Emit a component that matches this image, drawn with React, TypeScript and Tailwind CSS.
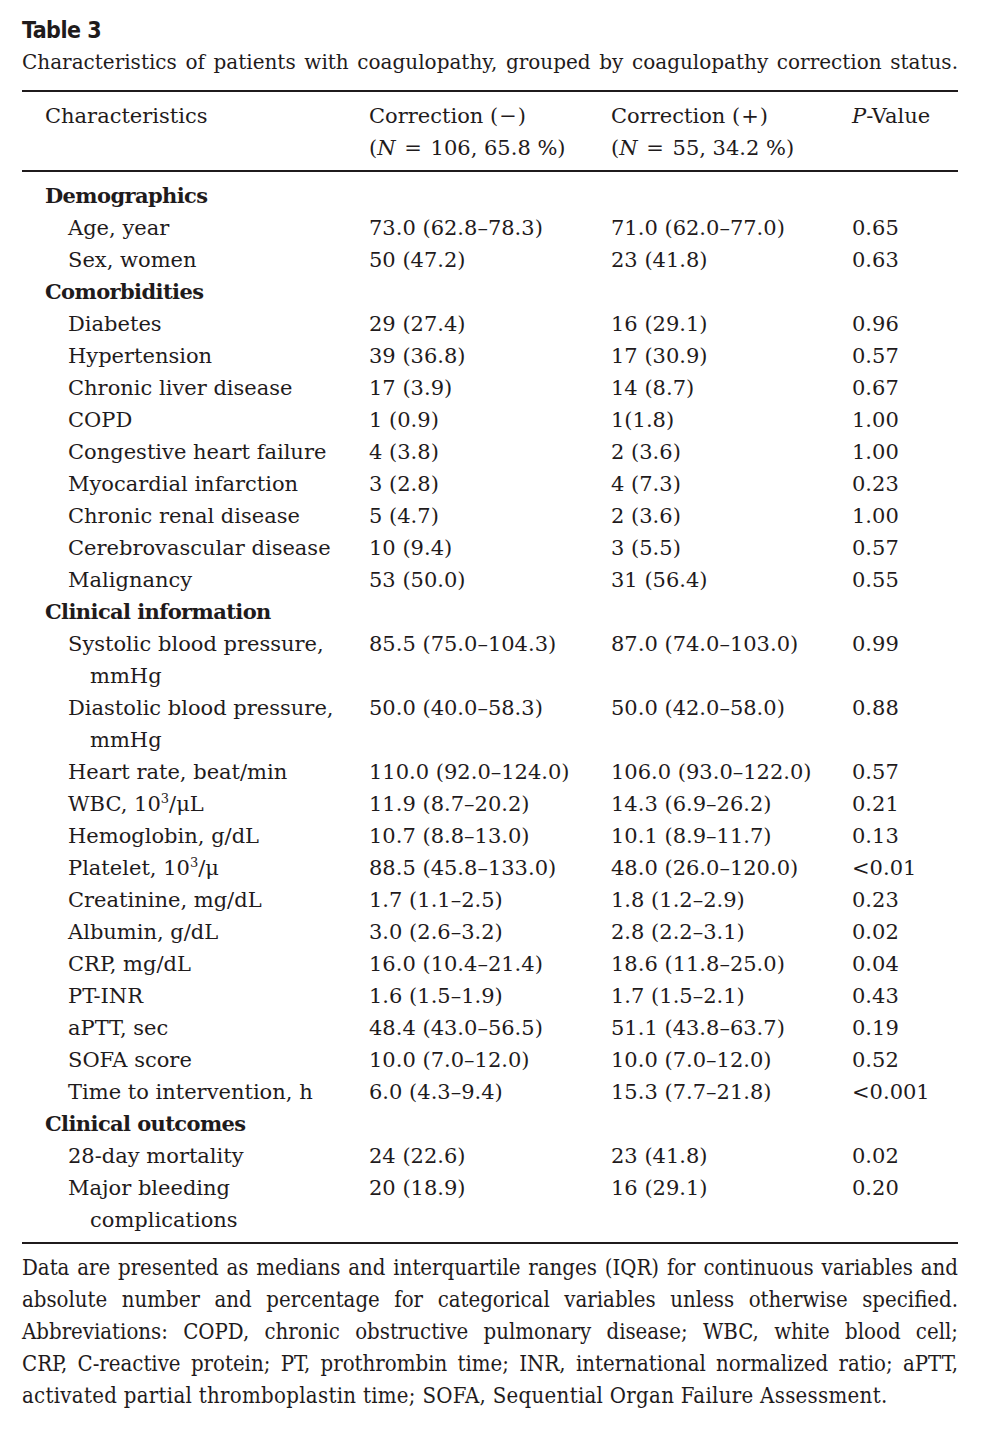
type Row =
  | { kind: 'group'; label: string }
  | { kind: 'item'; label: React.ReactNode; cont?: string; a: string; b: string; p: string };

const sup = 'text-[13px] relative -top-[8px]';

const rows: Row[] = [
  { kind: 'group', label: 'Demographics' },
  { kind: 'item', label: 'Age, year', a: '73.0 (62.8–78.3)', b: '71.0 (62.0–77.0)', p: '0.65' },
  { kind: 'item', label: 'Sex, women', a: '50 (47.2)', b: '23 (41.8)', p: '0.63' },
  { kind: 'group', label: 'Comorbidities' },
  { kind: 'item', label: 'Diabetes', a: '29 (27.4)', b: '16 (29.1)', p: '0.96' },
  { kind: 'item', label: 'Hypertension', a: '39 (36.8)', b: '17 (30.9)', p: '0.57' },
  { kind: 'item', label: 'Chronic liver disease', a: '17 (3.9)', b: '14 (8.7)', p: '0.67' },
  { kind: 'item', label: 'COPD', a: '1 (0.9)', b: '1(1.8)', p: '1.00' },
  { kind: 'item', label: 'Congestive heart failure', a: '4 (3.8)', b: '2 (3.6)', p: '1.00' },
  { kind: 'item', label: 'Myocardial infarction', a: '3 (2.8)', b: '4 (7.3)', p: '0.23' },
  { kind: 'item', label: 'Chronic renal disease', a: '5 (4.7)', b: '2 (3.6)', p: '1.00' },
  { kind: 'item', label: 'Cerebrovascular disease', a: '10 (9.4)', b: '3 (5.5)', p: '0.57' },
  { kind: 'item', label: 'Malignancy', a: '53 (50.0)', b: '31 (56.4)', p: '0.55' },
  { kind: 'group', label: 'Clinical information' },
  { kind: 'item', label: 'Systolic blood pressure,', cont: 'mmHg', a: '85.5 (75.0–104.3)', b: '87.0 (74.0–103.0)', p: '0.99' },
  { kind: 'item', label: 'Diastolic blood pressure,', cont: 'mmHg', a: '50.0 (40.0–58.3)', b: '50.0 (42.0–58.0)', p: '0.88' },
  { kind: 'item', label: 'Heart rate, beat/min', a: '110.0 (92.0–124.0)', b: '106.0 (93.0–122.0)', p: '0.57' },
  {
    kind: 'item',
    label: (
      <>
        WBC, 10<sup className={sup}>3</sup>/μL
      </>
    ),
    a: '11.9 (8.7–20.2)',
    b: '14.3 (6.9–26.2)',
    p: '0.21',
  },
  { kind: 'item', label: 'Hemoglobin, g/dL', a: '10.7 (8.8–13.0)', b: '10.1 (8.9–11.7)', p: '0.13' },
  {
    kind: 'item',
    label: (
      <>
        Platelet, 10<sup className={sup}>3</sup>/μ
      </>
    ),
    a: '88.5 (45.8–133.0)',
    b: '48.0 (26.0–120.0)',
    p: '<0.01',
  },
  { kind: 'item', label: 'Creatinine, mg/dL', a: '1.7 (1.1–2.5)', b: '1.8 (1.2–2.9)', p: '0.23' },
  { kind: 'item', label: 'Albumin, g/dL', a: '3.0 (2.6–3.2)', b: '2.8 (2.2–3.1)', p: '0.02' },
  { kind: 'item', label: 'CRP, mg/dL', a: '16.0 (10.4–21.4)', b: '18.6 (11.8–25.0)', p: '0.04' },
  { kind: 'item', label: 'PT-INR', a: '1.6 (1.5–1.9)', b: '1.7 (1.5–2.1)', p: '0.43' },
  { kind: 'item', label: 'aPTT, sec', a: '48.4 (43.0–56.5)', b: '51.1 (43.8–63.7)', p: '0.19' },
  { kind: 'item', label: 'SOFA score', a: '10.0 (7.0–12.0)', b: '10.0 (7.0–12.0)', p: '0.52' },
  { kind: 'item', label: 'Time to intervention, h', a: '6.0 (4.3–9.4)', b: '15.3 (7.7–21.8)', p: '<0.001' },
  { kind: 'group', label: 'Clinical outcomes' },
  { kind: 'item', label: '28-day mortality', a: '24 (22.6)', b: '23 (41.8)', p: '0.02' },
  { kind: 'item', label: 'Major bleeding', cont: 'complications', a: '20 (18.9)', b: '16 (29.1)', p: '0.20' },
];

const notes = [
  'Data are presented as medians and interquartile ranges (IQR) for continuous variables and',
  'absolute number and percentage for categorical variables unless otherwise specified.',
  'Abbreviations: COPD, chronic obstructive pulmonary disease; WBC, white blood cell;',
  'CRP, C-reactive protein; PT, prothrombin time; INR, international normalized ratio; aPTT,',
];

const grid = 'grid grid-cols-[324px_242px_241px_1fr]';

export default function App() {
  return (
    <div className="min-h-[1442px] bg-white text-[#1f1b1c]">
      <div className="mx-[22px] w-[936px] pt-[14px]">
        {/* Caption */}
        <div className="font-['DejaVu_Sans',sans-serif] text-[23px] font-bold leading-[32px] tracking-[-0.5px] [font-stretch:condensed]">
          Table 3
        </div>
        <div className="whitespace-nowrap font-['DejaVu_Serif',serif] text-[20px] leading-[32px] [text-align-last:justify]">
          Characteristics of patients with coagulopathy, grouped by coagulopathy correction status.
        </div>

        {/* Table */}
        <div className="mt-[12px] border-t-2 border-[#1f1b1c] font-['DejaVu_Serif',serif] text-[21px] leading-[32px]">
          <div className={`${grid} pt-[8px] pb-[6px] pl-[23px]`}>
            <div>Characteristics</div>
            <div>
              Correction (<span className="px-[1px]">−</span>)
              <br />(<i>N</i> <span className="px-[2px]">=</span> 106, 65.8 %)
            </div>
            <div>
              Correction (<span className="px-[1px]">+</span>)
              <br />(<i>N</i> <span className="px-[2px]">=</span> 55, 34.2 %)
            </div>
            <div>
              <i>P</i>-Value
            </div>
          </div>
          <div className="border-t-2 border-[#1f1b1c] pt-[8px] pb-[6px] pl-[23px]">
            {rows.map((r, i) =>
              r.kind === 'group' ? (
                <div key={i} className="font-bold tracking-[-0.6px]">
                  {r.label}
                </div>
              ) : (
                <div key={i} className={grid}>
                  <div className="pl-[23px]">
                    <div className="whitespace-nowrap">{r.label}</div>
                    {r.cont && <div className="pl-[22px]">{r.cont}</div>}
                  </div>
                  <div className="whitespace-nowrap">{r.a}</div>
                  <div className="whitespace-nowrap">{r.b}</div>
                  <div className="whitespace-nowrap">{r.p}</div>
                </div>
              )
            )}
          </div>
          <div className="border-t-2 border-[#1f1b1c] pt-[8px] font-['DejaVu_Serif',serif] text-[22px] leading-[32px] [font-stretch:condensed]">
            {notes.map((n) => (
              <div key={n} className="whitespace-nowrap [text-align-last:justify]">
                {n}
              </div>
            ))}
            <div className="whitespace-nowrap tracking-[0.3px]">
              activated partial thromboplastin time; SOFA, Sequential Organ Failure Assessment.
            </div>
          </div>
        </div>
      </div>
    </div>
  );
}
